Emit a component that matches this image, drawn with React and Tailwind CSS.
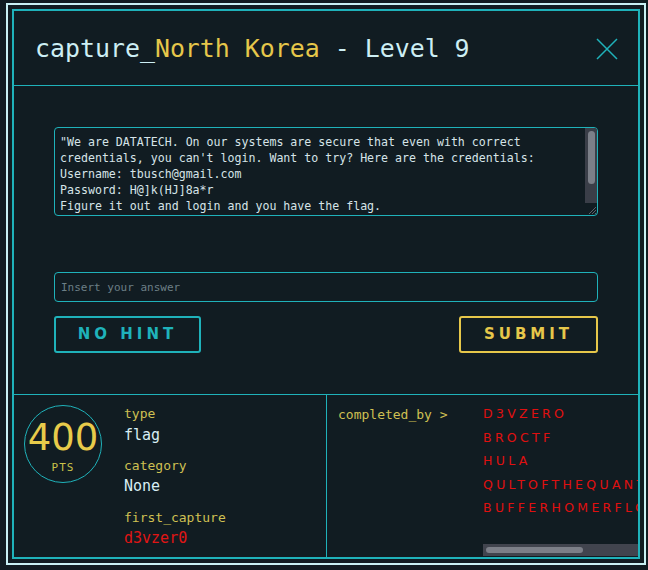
import React from 'react';

const mono = { fontFamily: '"DejaVu Sans Mono", "Liberation Mono", monospace' };
const sans = { fontFamily: '"DejaVu Sans", "Liberation Sans", sans-serif' };

const solvers = ['D3VZERO', 'BROCTF', 'HULA', 'QULTOFTHEQUANT', 'BUFFERHOMERFLOW'];

const description = `"We are DATATECH. On our systems are secure that even with correct credentials, you can't login. Want to try? Here are the credentials:
Username: tbusch@gmail.com
Password: H@]k(HJ]8a*r
Figure it out and login and you have the flag.`;

export default function App() {
  return (
    <div className="min-h-screen w-full bg-[#111c22] pt-[3px] pl-[6px]" style={mono}>
      <div className="w-[640px] h-[562px] border-2 border-[#c8f0f4] p-[4px]">
        <div className="h-full border-2 border-[#1fb2ba] flex flex-col">
          {/* header */}
          <div className="h-[75px] shrink-0 flex items-center justify-between pl-[21px] pr-[20px] border-b border-[#1fb2ba]">
            <h1 className="mt-[3px] text-[24.9px] leading-none text-[#cdeef4] whitespace-nowrap">
              capture_<span className="text-[#e6c74a]">North Korea</span> - Level 9
            </h1>
            <svg width="22" height="22" viewBox="0 0 22 22" className="mt-[1px]">
              <path d="M1 1 L21 21 M21 1 L1 21" stroke="#1fb2ba" strokeWidth="1.5" fill="none" />
            </svg>
          </div>

          {/* body */}
          <div className="shrink-0 px-[40px] pt-[41px] pb-[41px] flex flex-col">
            <div className="h-[89px] w-full rounded-[4px] border border-[#1fb2ba] flex overflow-hidden">
              <div
                className="flex-1 min-w-0 pl-[5px] pr-[8px] pt-[6px] text-[11.6px] leading-[16px] text-[#d6e4e8] whitespace-pre-wrap"
                style={mono}
              >
                {description}
              </div>
              {/* scrollbar */}
              <div className="w-[12px] shrink-0 flex flex-col">
                <div className="flex-1 bg-[#3a3e48] pt-[3px] flex justify-center">
                  <div className="w-[7px] h-[53px] rounded-full bg-[#7b7f88]" />
                </div>
                <div className="h-[12px] flex items-end justify-end">
                  <svg width="12" height="12" viewBox="0 0 12 12">
                    <path d="M11 4 L4 11 M11 7 L7 11 M11 10 L10 11" stroke="#5d616a" strokeWidth="1" />
                  </svg>
                </div>
              </div>
            </div>
            <input
              type="text"
              placeholder="Insert your answer"
              className="mt-[56px] h-[30px] w-full rounded-[4px] border border-[#1fb2ba] bg-transparent px-[6px] text-[11px] text-[#d6e4e8] placeholder:text-[#6c7f86] outline-none"
              style={mono}
            />
            <div className="mt-[14px] flex justify-between">
              <button className="h-[37px] w-[147px] rounded-[3px] border-2 border-[#1fb2ba] text-[15px] font-bold tracking-[4px] text-[#1fb2ba]" style={sans}>
                NO HINT
              </button>
              <button className="h-[37px] w-[139px] rounded-[3px] border-2 border-[#e6c74a] text-[15px] font-bold tracking-[4px] text-[#e6c74a]" style={sans}>
                SUBMIT
              </button>
            </div>
          </div>

          {/* footer */}
          <div className="flex-1 min-h-0 flex border-t border-[#1fb2ba]">
            <div className="w-[312px] shrink-0 flex pl-[10px] pt-[10px]">
              <div className="w-[78px] h-[78px] shrink-0 rounded-full border border-[#1fb2ba] flex flex-col items-center justify-center">
                <span className="text-[37px] leading-none text-[#e8cb4a] mt-[4px]" style={sans}>400</span>
                <span className="text-[11px] leading-none text-[#c9c24a] mt-[6px] tracking-[1px]">PTS</span>
              </div>
              <div className="ml-[22px] pt-[1px]">
                <div className="text-[13px] leading-[16px] text-[#cfc052]">type</div>
                <div className="text-[15px] leading-[26px] text-[#d8eef4]">flag</div>
                <div className="mt-[10px] text-[13px] leading-[16px] text-[#cfc052]">category</div>
                <div className="text-[15px] leading-[24px] text-[#d8eef4]">None</div>
                <div className="mt-[12px] text-[13px] leading-[16px] text-[#cfc052]">first_capture</div>
                <div className="text-[15px] leading-[24px] text-[#e01515]">d3vzer0</div>
              </div>
            </div>
            <div className="flex-1 min-w-0 flex border-l border-[#1fb2ba]">
              <div className="w-[156px] shrink-0 pl-[11px] pt-[12px] text-[13px] leading-[16px] text-[#cfc052] whitespace-nowrap">
                completed_by &gt;
              </div>
              <div className="flex-1 min-w-0 flex flex-col">
                <div className="flex-1 min-h-0 overflow-hidden pt-[7px]">
                  {solvers.map((name) => (
                    <div key={name} className="text-[12.5px] leading-[23.5px] tracking-[3.3px] text-[#e01010] whitespace-nowrap" style={sans}>
                      {name}
                    </div>
                  ))}
                </div>
                {/* horizontal scrollbar */}
                <div className="h-[12px] shrink-0 mb-[1px] bg-[#41444e] flex items-center pl-[3px]">
                  <div className="h-[6px] w-[97px] rounded-full bg-[#7c7f88]" />
                </div>
              </div>
            </div>
          </div>
        </div>
      </div>
    </div>
  );
}
